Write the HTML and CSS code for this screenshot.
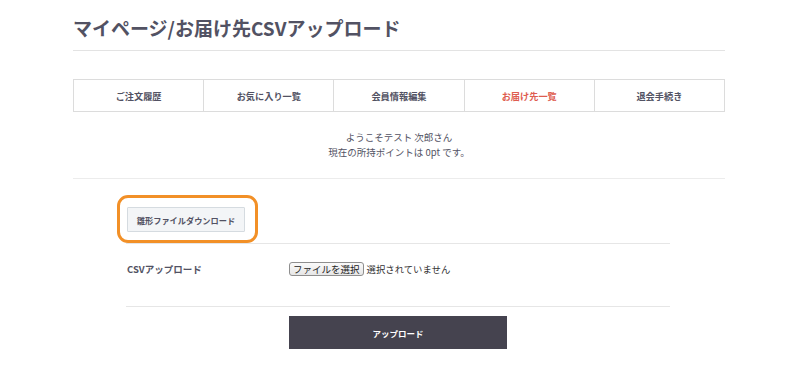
FILE: index.html
```html
<!DOCTYPE html>
<html lang="ja">
<head>
<meta charset="utf-8">
<title>マイページ/お届け先CSVアップロード</title>
<link rel="stylesheet" href="styles.css">
</head>
<body>
<div class="page">
  <header class="page-header">
    <h1 class="page-title">マイページ/お届け先CSVアップロード</h1>
  </header>
  <nav class="tabs">
    <a class="tab">ご注文履歴</a>
    <a class="tab">お気に入り一覧</a>
    <a class="tab">会員情報編集</a>
    <a class="tab tab-active">お届け先一覧</a>
    <a class="tab">退会手続き</a>
  </nav>
  <div class="welcome">
    <p>ようこそテスト 次郎さん</p>
    <p>現在の所持ポイントは 0pt です。</p>
  </div>
  <div class="separator"></div>
  <div class="form">
    <div class="dl-row">
      <span class="highlight"><button type="button" class="dl-btn">雛形ファイルダウンロード</button></span>
    </div>
    <div class="csv-row">
      <div class="csv-label">CSVアップロード</div>
      <div class="file-field">
        <button type="button" class="file-btn">ファイルを選択</button>
        <span class="file-status">選択されていません</span>
      </div>
    </div>
    <div class="submit-row">
      <button type="button" class="upload-btn">アップロード</button>
    </div>
  </div>
</div>
</body>
</html>
```

FILE: styles.css
```css
* { box-sizing: border-box; }
html, body { margin: 0; padding: 0; background: #fff; }
body {
  font-family: "Noto Sans CJK JP", "Noto Sans", sans-serif;
  color: #525263;
}
p { margin: 0; }
.page {
  width: 652px;
  margin: 0 auto;
}
.page-header {
  padding-top: 14px;
  padding-bottom: 8px;
  border-bottom: 1px solid #e3e3e3;
}
.page-title {
  margin: 0;
  font-size: 19px;
  line-height: 28px;
  font-weight: 700;
  color: #525263;
}
.tabs {
  margin-top: 28px;
  display: flex;
  border: 1px solid #dcdcdc;
  height: 33px;
}
.tab {
  flex: 1;
  display: flex;
  align-items: center;
  justify-content: center;
  font-size: 9.2px;
  font-weight: 700;
  color: #525263;
  border-left: 1px solid #dcdcdc;
}
.tab:first-child { border-left: none; }
.tab-active { color: #de5d50; }
.welcome {
  margin-top: 18px;
  text-align: center;
  font-size: 9.5px;
  line-height: 15px;
  color: #525263;
}
.separator {
  margin-top: 18px;
  border-top: 1px solid #ececec;
}
.form {
  width: 544px;
  margin: 0 0 0 53px;
}
.dl-row {
  padding-top: 28px;
  padding-left: 1px;
  padding-bottom: 11px;
  border-bottom: 1px solid #e6e6e6;
}
.highlight {
  position: relative;
  display: inline-block;
  vertical-align: top;
}
.highlight::after {
  content: "";
  position: absolute;
  left: -10px;
  right: -13px;
  top: -12px;
  bottom: -11px;
  border: 3px solid #f29027;
  border-radius: 11px;
  pointer-events: none;
}
.dl-btn {
  display: block;
  width: 118px;
  height: 25px;
  padding: 0;
  margin: 0;
  background: #f3f5f7;
  border: 1px solid #d5dbe0;
  border-radius: 1px;
  font-family: inherit;
  font-size: 8.2px;
  font-weight: 700;
  color: #525263;
}
.csv-row {
  display: flex;
  align-items: flex-start;
  height: 63px;
  padding-top: 18px;
  padding-left: 1px;
  border-bottom: 1px solid #e6e6e6;
}
.csv-label {
  width: 162px;
  font-size: 9.5px;
  line-height: 14px;
  font-weight: 700;
  color: #525263;
}
.file-field {
  display: flex;
  align-items: center;
  height: 14px;
}
.file-btn {
  height: 14px;
  padding: 0 3px;
  margin: 0 3px 0 0;
  background: linear-gradient(#fafafa, #e6e6e6);
  border: 1px solid #8e8e8e;
  border-radius: 3px;
  font-family: inherit;
  font-size: 9.5px;
  line-height: 12px;
  color: #222;
}
.file-status {
  font-size: 9.4px;
  line-height: 14px;
  color: #333;
}
.submit-row {
  margin-top: 9px;
  display: flex;
  justify-content: center;
}
.upload-btn {
  width: 218px;
  height: 33px;
  margin: 0;
  padding: 0;
  background: #45434f;
  border: none;
  font-family: inherit;
  font-size: 8.5px;
  font-weight: 700;
  color: #fff;
}
```
